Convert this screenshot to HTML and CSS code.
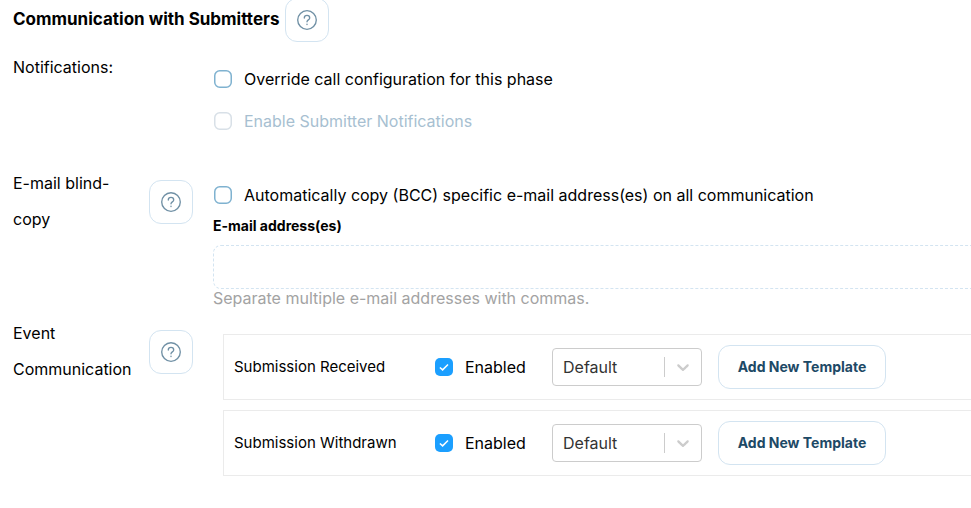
FILE: index.html
```html
<!DOCTYPE html>
<html lang="en">
<head>
<meta charset="utf-8">
<title>Communication with Submitters</title>
<link rel="stylesheet" href="styles.css">
</head>
<body>
<svg class="defs" width="0" height="0" aria-hidden="true">
  <symbol id="help" viewBox="0 0 20 20"><circle cx="10" cy="10" r="9.3"/><path d="M7.3 8c0-1.5 1.1-2.6 2.7-2.6s2.7 1 2.7 2.5c0 1.9-2.7 2-2.7 3.8"/><path d="M10 14.1v.5"/></symbol>
  <symbol id="tick" viewBox="0 0 18 18"><path d="M4.9 9.5l2.7 2.4 5.4-5.4"/></symbol>
  <symbol id="chevron" viewBox="0 0 20 20"><path d="M4.516 7.548c0.436-0.446 1.043-0.481 1.576 0l3.908 3.747 3.908-3.747c0.533-0.481 1.141-0.446 1.574 0 0.436 0.445 0.408 1.197 0 1.615-0.406 0.418-4.695 4.502-4.695 4.502-0.217 0.223-0.502 0.335-0.787 0.335s-0.57-0.112-0.789-0.335c0 0-4.287-4.084-4.695-4.502s-0.436-1.17 0-1.615z"/></symbol>
  <symbol id="box" viewBox="0 0 18 18"><rect x=".75" y=".75" width="16.5" height="16.5" rx="5"/></symbol>
</svg>
<main class="form">
  <header class="heading">
    <h1>Communication with Submitters</h1>
    <button class="help"><svg><use href="#help"/></svg></button>
  </header>
  <section class="row notifications">
    <div class="label">Notifications:</div>
    <div class="content">
      <label class="option"><svg class="box"><use href="#box"/></svg>Override call configuration for this phase</label>
      <label class="option disabled"><svg class="box"><use href="#box"/></svg>Enable Submitter Notifications</label>
    </div>
  </section>
  <section class="row bcc">
    <div class="label"><span>E-mail blind-<br>copy</span><button class="help"><svg><use href="#help"/></svg></button></div>
    <div class="content">
      <label class="option"><svg class="box"><use href="#box"/></svg>Automatically copy (BCC) specific e-mail address(es) on all communication</label>
      <div class="field-label">E-mail address(es)</div>
      <div class="input"></div>
      <div class="hint">Separate multiple e-mail addresses with commas.</div>
    </div>
  </section>
  <section class="row events">
    <div class="label"><span>Event<br>Communication</span><button class="help"><svg><use href="#help"/></svg></button></div>
    <div class="content">
      <div class="event">
        <span class="name">Submission Received</span>
        <label class="enabled"><span class="checked"><svg><use href="#tick"/></svg></span>Enabled</label>
        <div class="select"><span>Default</span><i><svg><use href="#chevron"/></svg></i></div>
        <button class="add">Add New Template</button>
      </div>
      <div class="event">
        <span class="name">Submission Withdrawn</span>
        <label class="enabled"><span class="checked"><svg><use href="#tick"/></svg></span>Enabled</label>
        <div class="select"><span>Default</span><i><svg><use href="#chevron"/></svg></i></div>
        <button class="add">Add New Template</button>
      </div>
    </div>
  </section>
</main>
</body>
</html>
```
FILE: styles.css
```css
* { box-sizing: border-box; }
body { margin: 0; background: #fff; color: #000; font: 16px/36px Inter, sans-serif; overflow: hidden; }
.defs { display: block; position: absolute; }
.form { padding-left: 13px; }
button { font-family: inherit; background: #fff; border: 1px solid #d3e4f1; padding: 0; flex: none; }
.heading { display: flex; align-items: center; height: 44px; margin-top: -2px; }
h1 { margin: 0; width: 272px; font-size: 17px; font-weight: 700; line-height: 36px; white-space: nowrap; padding-bottom: 2px; }
.help { width: 44px; height: 44px; border-radius: 12px; display: flex; align-items: center; justify-content: center; }
.help svg { width: 20px; height: 20px; fill: none; stroke: #7090a5; stroke-width: 1.35; stroke-linecap: round; }
.row { display: flex; }
.label { width: 200px; flex: none; display: flex; align-items: flex-start; }
.label span { width: 136px; }
.label .help { margin-top: 15px; }
.content { width: 770px; flex: none; }
.notifications { height: 116px; padding-top: 7px; }
.notifications .content { padding-top: 9px; }
.option { display: flex; align-items: center; height: 42px; line-height: 42px; white-space: nowrap; }
.box { width: 18px; height: 18px; flex: none; margin: 0 12px 0 1px; fill: #fff; stroke: #7fb2d0; stroke-width: 1.5; }
.option.disabled { color: #a7bfd1; }
.disabled .box { stroke: #d8e0e7; }
.bcc { height: 158px; padding-top: 7px; }
.bcc .content { padding-top: 9px; }
.field-label { font-size: 14px; font-weight: 700; line-height: 20px; }
.input { height: 44px; margin-top: 9px; border: 1px dashed #d3e4f1; border-radius: 8px; }
.hint { color: #a3a3a3; line-height: 18px; }
.events { margin-top: -8px; padding-top: 7px; }
.events .content { padding: 19px 0 0 10px; }
.event { display: flex; align-items: center; height: 66px; margin-bottom: 10px; padding-left: 10px; border: 1px solid #ebebeb; }
.name { width: 201px; font-size: 15px; }
.enabled { width: 117px; display: flex; align-items: center; }
.checked { width: 18px; height: 18px; background: #1b9fff; border-radius: 5px; margin-right: 12px; }
.checked svg { display: block; width: 18px; height: 18px; fill: none; stroke: #fff; stroke-width: 1.5; }
.select { width: 150px; height: 38px; border: 1px solid #ccc; border-radius: 4px; display: flex; align-items: center; color: #333; padding-left: 10px; }
.select span { flex: 1; }
.select i { width: 37px; height: 20px; border-left: 1px solid #ccc; padding-left: 8px; }
.select svg { display: block; width: 20px; height: 20px; fill: #ccc; }
.add { width: 168px; height: 44px; margin-left: 16px; border-radius: 12px; color: #1d4966; font-size: 14px; font-weight: 700; padding-bottom: 2px; }
```
